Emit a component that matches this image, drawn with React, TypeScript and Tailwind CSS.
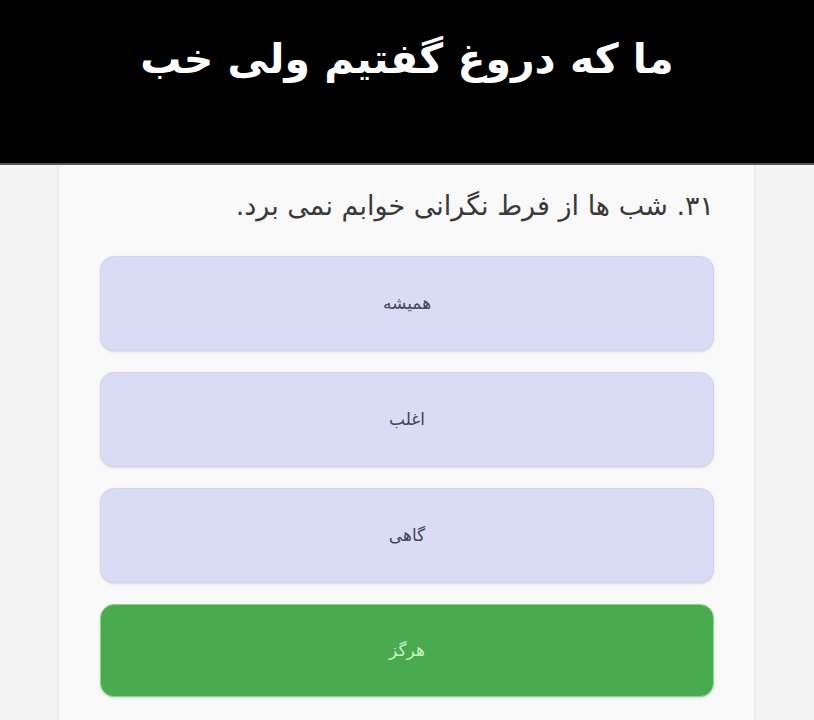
import React from "react";

const options = [
  { label: "همیشه", selected: false },
  { label: "اغلب", selected: false },
  { label: "گاهی", selected: false },
  { label: "هرگز", selected: true },
];

export default function App() {
  return (
    <div
      className="w-[814px] h-[720px] overflow-hidden bg-[#f3f4f3]"
      style={{ fontFamily: '"DejaVu Sans", "Noto Sans", sans-serif' }}
    >
      <header
        dir="rtl"
        className="h-[165px] bg-black flex items-center justify-center border-b-2 border-[#555]"
      >
        <h1 className="text-white font-bold text-[41px] leading-none -mt-[44px] tracking-tight">
          ما که دروغ گفتیم ولی خب
        </h1>
      </header>
      <main
        dir="rtl"
        className="ml-[57px] w-[699px] h-full bg-[#f8f9f8] border-x-2 border-[#eceeec] pt-[22px] pr-[40px] pl-[41px]"
      >
        <p className="text-[27px] text-[#3a3a3a] leading-[38px] mb-[31px]">
          ۳۱. شب ها از فرط نگرانی خوابم نمی برد.
        </p>
        <div className="flex flex-col gap-[21px]">
          {options.map((o) => (
            <button
              key={o.label}
              className={
                o.selected
                  ? "h-[93px] w-full rounded-[14px] bg-[#4aaa4f] border border-[#7fdf7a] text-[#c4efc0] text-[17px] shadow-sm"
                  : "h-[95px] w-full rounded-[14px] bg-[#dadcf6] border border-[#d2d4ee] text-[#44455a] text-[17px] shadow-sm"
              }
            >
              {o.label}
            </button>
          ))}
        </div>
      </main>
    </div>
  );
}
